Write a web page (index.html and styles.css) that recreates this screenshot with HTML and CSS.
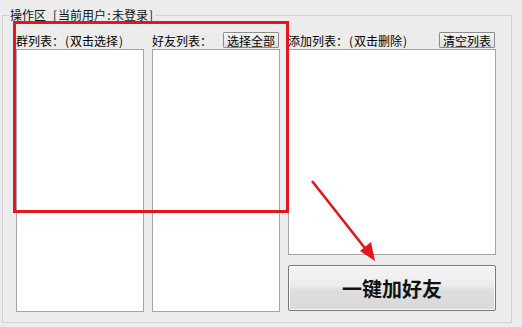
FILE: index.html
```html
<!DOCTYPE html>
<html lang="zh-CN">
<head>
    <meta charset="UTF-8">
    <title>操作区</title>
    <link rel="stylesheet" href="styles.css">
</head>
<body>

    <fieldset class="panel">
        <legend class="panel-title">操作区<span class="hw"></span><span class="hw">[</span>当前用户<span class="hw">:</span>未登录<span class="hw">]</span></legend>
        <div class="columns">
            <div class="col col-narrow">
                <div class="col-head">
                    <span class="label">群列表：<span class="hw">(</span>双击选择<span class="hw">)</span></span>
                </div>
                <div class="listbox"></div>
            </div>
            <div class="col col-narrow">
                <div class="col-head">
                    <span class="label">好友列表：</span>
                    <button class="small-btn">选择全部</button>
                </div>
                <div class="listbox"></div>
            </div>
            <div class="col col-wide">
                <div class="col-head">
                    <span class="label">添加列表：<span class="hw">(</span>双击删除<span class="hw">)</span></span>
                    <button class="small-btn">清空列表</button>
                </div>
                <div class="listbox listbox-short"></div>
                <button class="big-btn">一键加好友</button>
            </div>
        </div>
    </fieldset>

    <!-- annotation overlays -->
    <div class="highlight"></div>
    <svg class="arrow" width="80" height="90" viewBox="0 0 80 90">
        <line x1="2" y1="1" x2="58" y2="72" stroke="#e3161b" stroke-width="2.6"/>
        <polygon points="65,81 50,71 61,62" fill="#e3161b"/>
    </svg>

</body>
</html>
```

FILE: styles.css
```css
body {
    background-color: #ececec;
    font-family: "Noto Sans CJK SC", "Noto Sans", sans-serif;
    font-size: 12px;
    color: #000;
    margin: 0;
    padding: 0;
    width: 522px;
    height: 327px;
    overflow: hidden;
    position: relative;
}
.panel {
    margin: 8px 10px 0 2px;
    padding: 10px 15px 10px 13px;
    border: 1px solid #d2d2d2;
}
.panel-title {
    margin-left: -7px;
    padding: 0 1px;
    line-height: 14px;
    font-size: 12px;
    color: #111;
}
/* half-width punctuation, like the old bitmap font */
.hw {
    display: inline-block;
    width: 6px;
    text-align: center;
}
.columns {
    display: flex;
    gap: 8px;
    height: 280px;
}
.col {
    display: flex;
    flex-direction: column;
}
.col-narrow {
    width: 128px;
}
.col-wide {
    flex: 1;
}
.col-head {
    height: 17px;
    display: flex;
    align-items: flex-end;
    justify-content: space-between;
}
.label {
    line-height: 14px;
    padding-bottom: 1px;
    white-space: nowrap;
}
.small-btn {
    font-family: inherit;
    font-size: 12px;
    line-height: 13px;
    height: 16px;
    padding: 0 3px;
    margin: 0 1px 1px 0;
    border: 1px solid #8c8c8c;
    border-radius: 1px;
    background: linear-gradient(#f6f6f6, #dedede);
    color: #000;
}
.listbox {
    flex: 1;
    background-color: #fff;
    border: 1px solid #a5a5a5;
}
.listbox-short {
    flex: none;
    height: 206px;
    box-sizing: border-box;
}
.big-btn {
    margin-top: 10px;
    height: 46px;
    font-family: inherit;
    font-size: 20px;
    font-weight: bold;
    color: #111;
    border: 1px solid #777;
    border-radius: 2px;
    background: linear-gradient(#f4f4f4 0%, #ececec 45%, #dedede 55%, #d9d9d9 100%);
    box-shadow: inset 0 0 0 1px #fbfbfb;
}
.highlight {
    position: absolute;
    left: 13px;
    top: 21px;
    width: 270px;
    height: 186px;
    border: 3px solid #e3161b;
}
.arrow {
    position: absolute;
    left: 310px;
    top: 180px;
}
```
